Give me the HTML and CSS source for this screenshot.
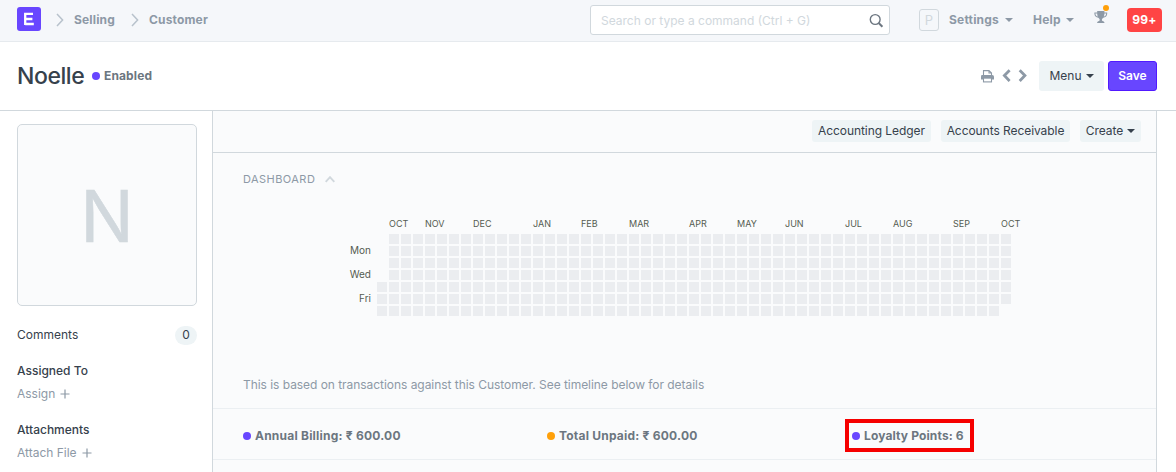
FILE: index.html
```html
<!DOCTYPE html>
<html lang="en">
<head>
<meta charset="utf-8">
<title>Noelle</title>
<link rel="stylesheet" href="styles.css">
</head>
<body>
<header class="navbar">
  <div class="logo"><svg width="24" height="24" viewBox="0 0 24 24"><rect width="24" height="24" rx="3" fill="#6846ff"/><path d="M8.2 6.9H16M8.2 12H15.4M8.2 17H16.8M8.2 5.8V18.1" stroke="#fff" stroke-width="2.3" fill="none"/></svg></div>
  <svg class="sep" width="8" height="14" viewBox="0 0 8 14"><path d="M1 1L6.6 7L1 13"/></svg>
  <a class="crumb selling">Selling</a>
  <svg class="sep" width="8" height="14" viewBox="0 0 8 14"><path d="M1 1L6.6 7L1 13"/></svg>
  <a class="crumb customer">Customer</a>
  <div class="search">
    <span class="placeholder">Search or type a command (Ctrl + G)</span>
    <svg width="15" height="15" viewBox="0 0 15 15"><circle cx="6.2" cy="6.5" r="4.9" fill="none" stroke="#6c7680" stroke-width="1.4"/><path d="M9.7 10L13.4 13.7" stroke="#6c7680" stroke-width="2"/></svg>
  </div>
  <div class="avatar">P</div>
  <a class="nav settings">Settings</a><i class="caret c1"></i>
  <a class="nav help">Help</a><i class="caret c2"></i>
  <div class="trophy">
    <svg width="14" height="13" viewBox="0 0 14 13"><path d="M3.2 0H10.4V1.4H13.2V2.8C13.2 5 11.5 6.4 9.3 6.8C8.5 7.5 7.9 8 7.9 8.8C7.9 9.7 8.3 10 9.2 10.2C10 10.5 10.5 11 10.5 12H3.1C3.1 11 3.6 10.5 4.4 10.2C5.3 10 5.7 9.7 5.7 8.8C5.7 8 5.1 7.5 4.3 6.8C2.1 6.4.4 5 .4 2.8V1.4H3.2ZM1.4 2.4C1.4 4 2.3 5.1 3.8 5.6C3.4 4.6 3.2 3.6 3.2 2.4ZM12.2 2.4H10.4C10.4 3.6 10.2 4.6 9.8 5.6C11.3 5.1 12.2 4 12.2 2.4Z" fill="#8d99a6" fill-rule="evenodd"/></svg>
    <i class="alert-dot"></i>
  </div>
  <div class="count">99+</div>
</header>

<section class="page-head">
  <h1>Noelle</h1>
  <i class="dot purple"></i><span class="status">Enabled</span>
  <svg class="tools" width="48" height="14" viewBox="0 0 48 14">
    <path d="M3.5 6.2V1.6H9L11.5 3.9V6.2M9 1.6V4H11.5" fill="none" stroke="#8d99a6" stroke-width="1.1"/>
    <path d="M1.8 6H12.2Q14 6 14 7.8V10.6H1V7.8Q1 6 1.8 6Z" fill="#8d99a6"/>
    <rect x="3.5" y="9.1" width="8" height="3.8" fill="#fff" stroke="#8d99a6" stroke-width="1.1"/>
    <path d="M29.6 1.3L24.4 6.6L29.6 11.9M39.7 1.3L44.9 6.6L39.7 11.9" fill="none" stroke="#8d99a6" stroke-width="2.8"/>
  </svg>
  <button class="btn menu">Menu<i class="caret"></i></button>
  <button class="btn save">Save</button>
</section>

<div class="body">
  <aside class="sidebar">
    <div class="photo"><span>N</span></div>
    <div class="row comments"><span>Comments</span><b>0</b></div>
    <div class="label assigned">Assigned To</div>
    <div class="action"><span class="assign">Assign</span><svg width="10" height="10"><path d="M5 .5V9.5M.5 5H9.5"/></svg></div>
    <div class="label attachments">Attachments</div>
    <div class="action"><span class="attach">Attach File</span><svg width="10" height="10"><path d="M5 .5V9.5M.5 5H9.5"/></svg></div>
  </aside>
  <main class="form">
    <div class="toolbar">
      <button class="chip w1">Accounting Ledger</button>
      <button class="chip w2">Accounts Receivable</button>
      <button class="chip w3">Create<i class="caret"></i></button>
    </div>
    <div class="dashboard">
      <div class="heading"><span>DASHBOARD</span><svg width="10" height="7" viewBox="0 0 10 7"><path d="M.7 5.8L5 1.2L9.3 5.8" fill="none" stroke="#d1d8dd" stroke-width="1.9"/></svg></div>
      <svg class="heatmap" width="700" height="110" viewBox="0 0 700 110">
        <defs><pattern id="day" width="12" height="12" patternUnits="userSpaceOnUse" x="34" y="18"><rect width="10" height="10" fill="#ebedf0"/></pattern></defs>
        <path d="M46 18H670V90H658V102H34V66H46Z" fill="url(#day)"/>
        <g class="months">
          <text x="46" y="11">OCT</text><text x="82" y="11">NOV</text><text x="130" y="11">DEC</text><text x="190" y="11">JAN</text><text x="238" y="11">FEB</text><text x="286" y="11">MAR</text><text x="346" y="11">APR</text><text x="394" y="11">MAY</text><text x="442" y="11">JUN</text><text x="502" y="11">JUL</text><text x="550" y="11">AUG</text><text x="610" y="11">SEP</text><text x="658" y="11">OCT</text>
        </g>
        <g class="days"><text x="28" y="38">Mon</text><text x="28" y="62">Wed</text><text x="28" y="86">Fri</text></g>
      </svg>
      <p class="note">This is based on transactions against this Customer. See timeline below for details</p>
    </div>
    <div class="stats">
      <div class="stat"><i class="dot purple"></i><span class="s1">Annual Billing: ₹ 600.00</span></div>
      <div class="stat"><i class="dot orange"></i><span class="s2">Total Unpaid: ₹ 600.00</span></div>
      <div class="stat highlight"><i class="dot purple"></i><span class="s3">Loyalty Points: 6</span></div>
    </div>
  </main>
</div>
</body>
</html>
```
FILE: styles.css
```css
* { box-sizing: border-box; }
body { margin: 0; height: 472px; overflow: hidden; background: #fff; color: #36414c; font: 12px/18px Inter, "Noto Sans", sans-serif; white-space: nowrap; }
svg { display: block; flex: none; }
button { font: inherit; color: inherit; border: 0; padding: 0; margin: 0; }

.navbar { display: flex; align-items: center; height: 42px; padding: 0 0 2px 17px; background: #f5f7fa; border-bottom: 1px solid #e6eaee; color: #8d99a6; font-weight: 700; }
.logo { width: 24px; margin: -1px 15px 0 0; }
.sep { margin-right: 10px; fill: none; stroke: #b8c2cc; stroke-width: 1.5; }
.crumb { display: block; padding-top: 1px; letter-spacing: .16px; }
.selling { width: 57px; }
.customer { width: 441px; }
.search { display: flex; align-items: center; justify-content: space-between; width: 300px; height: 30px; padding: 1px 5px 0 10px; border: 1px solid #d1d8dd; border-radius: 3px; background: #fff; font-weight: 400; }
.placeholder { color: #d1d8dd; padding-top: 1px; }
.avatar { width: 20px; height: 22px; margin-left: 29px; border: 1px solid #d1d8dd; border-radius: 3px; color: #d1d8dd; font-weight: 400; font-size: 13px; line-height: 21px; text-align: center; }
.settings { width: 56px; margin-left: 10px; letter-spacing: .2px; }
.caret { display: block; flex: none; width: 0; border: 4px solid transparent; border-top-color: currentColor; border-bottom: 0; }
.help { width: 33px; margin-left: 20px; letter-spacing: .2px; }
.trophy { position: relative; width: 14px; margin: -5px 0 0 20px; }
.alert-dot { position: absolute; top: -6px; right: -1px; width: 6px; height: 6px; border-radius: 50%; background: #ffa00a; }
.count { width: 35px; height: 24px; margin-left: 19px; border-radius: 4px; background: #ff4444; color: #fff; font-size: 12px; line-height: 24px; text-align: center; letter-spacing: .2px; }

.page-head { display: flex; align-items: center; height: 69px; padding: 0 19px 0 17px; border-bottom: 1px solid #d1d8dd; }
h1 { width: 75px; margin: 0; font-size: 23px; line-height: 30px; font-weight: 500; letter-spacing: -.45px; }
.dot { flex: none; width: 8px; height: 8px; border-radius: 50%; }
.purple { background: #6846ff; }
.orange { background: #ffa00a; }
.status { margin-left: 4px; color: #6c7680; font-weight: 700; letter-spacing: .12px; }
.tools { margin: 0 11px 0 auto; }
.btn { display: flex; align-items: center; justify-content: center; height: 30px; border-radius: 3px; }
.menu { width: 65px; margin-right: 4px; gap: 4px; background: #eef4f6; }
.save { width: 49px; border: 1px solid #5119ff; background: #6846ff; color: #fff; font-weight: 600; }

.body { display: flex; height: 361px; }
.sidebar { width: 212px; padding: 13px 15px 0 17px; }
.photo { display: flex; align-items: center; justify-content: center; height: 182px; border: 1px solid #d1d8dd; border-radius: 5px; background: #fafbfc; color: #d1d8dd; font-size: 71px; padding-top: 2px; -webkit-text-stroke: .5px #d1d8dd; }
.comments { display: flex; align-items: center; justify-content: space-between; height: 20px; margin-top: 19px; }
.comments b { width: 22px; height: 19px; border-radius: 10px; background: #eef4f6; font-weight: 400; text-align: center; line-height: 18px; }
.label { margin-top: 17px; font-weight: 500; }
.attachments { margin-top: 18px; }
.action { display: flex; align-items: center; gap: 5px; height: 18px; margin-top: 5px; color: #8d99a6; }
.action path { stroke: #8d99a6; stroke-width: 1.2; }

.form { width: 945px; border: solid #d1d8dd; border-width: 0 1px; background: #fafbfc; }
.toolbar { display: flex; justify-content: flex-end; gap: 10px; height: 42px; padding: 9px 15px 0 0; border-bottom: 1px solid #d1d8dd; }
.chip { display: flex; align-items: center; justify-content: center; gap: 4px; height: 22px; border-radius: 3px; background: #eef4f6; letter-spacing: -.06px; }
.w1 { width: 119px; }
.w2 { width: 129px; }
.w3 { width: 61px; }
.dashboard { height: 256px; padding: 17px 0 0 30px; border-bottom: 1px solid #ebeff2; }
.heading { display: flex; align-items: center; gap: 10px; height: 18px; color: #8d99a6; font-size: 11px; letter-spacing: .45px; }
.heatmap { margin: 28px 0 0 100px; fill: #555b51; }
.months { font-size: 9px; }
.days { font-size: 10px; text-anchor: end; }
.note { margin: 50px 0 0; color: #8d99a6; letter-spacing: -.045px; }
.stats { display: grid; grid-template-columns: 304px 304px 1fr; align-items: center; height: 51px; padding: 0 0 0 30px; border-bottom: 1px solid #ebeff2; color: #6c7680; font-weight: 700; }
.stat { display: flex; align-items: center; gap: 4px; padding-top: 3px; letter-spacing: .22px; }
.highlight { width: 129px; height: 33px; margin: 3px 0 0 -6px; padding: 0 0 0 3px; border: 4px solid #f60000; letter-spacing: .13px; }
```
